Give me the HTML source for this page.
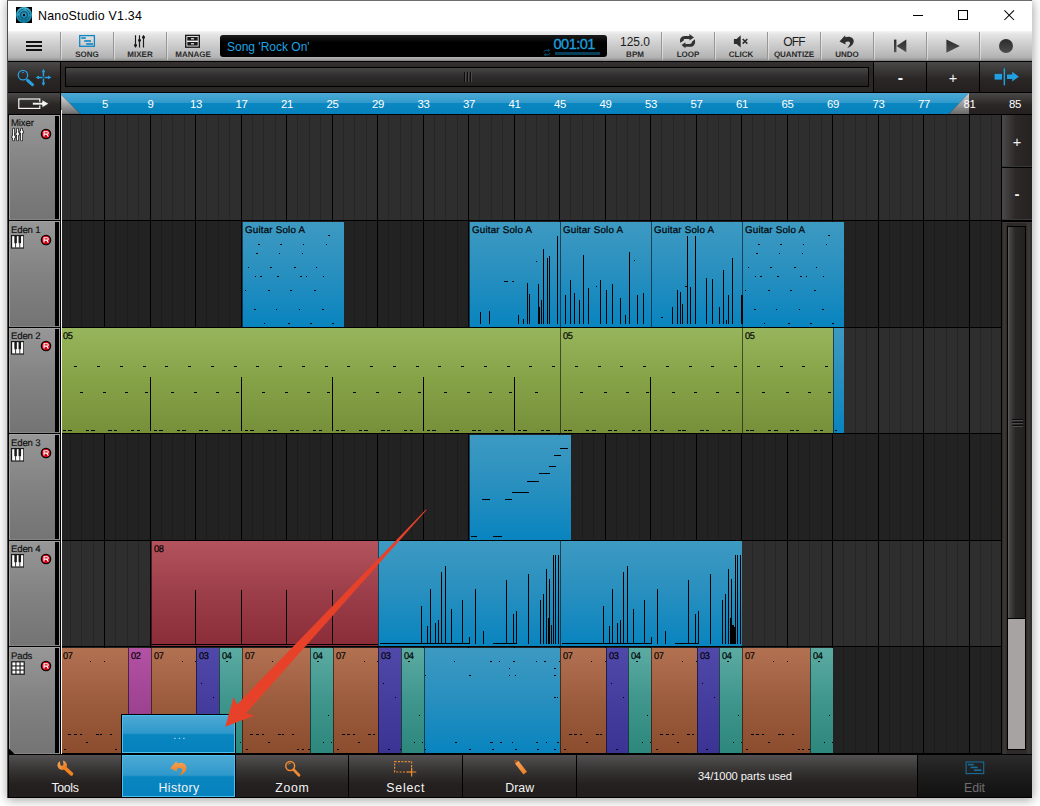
<!DOCTYPE html><html><head><meta charset="utf-8"><title>NanoStudio V1.34</title><style>
*{box-sizing:border-box}
html,body{margin:0;padding:0}
body{width:1040px;height:806px;overflow:hidden;background:#fff;font-family:"Liberation Sans",sans-serif;position:relative}
.a{position:absolute}
#shadow{left:8px;top:0;width:1024px;height:797px;box-shadow:0 2px 10px 1px rgba(0,0,0,.36)}
#win{left:7px;top:0;width:1025.4px;height:798.4px;background:#000;border:1px solid #4b4b4b;border-top-color:#6e6e6e}
#title{left:8px;top:1px;width:1024px;height:30px;background:#fff}
#title .t{left:30px;top:7.8px;font-size:12.4px;color:#000;white-space:nowrap;letter-spacing:.22px}
#tb{left:8px;top:31px;width:1024px;height:30px;background:linear-gradient(#f4f4f4 0,#e6e6e6 10%,#d0d0d0 40%,#c0c0c0 68%,#b2b2b2 88%,#9c9c9c 95%,#808080 100%)}
.sep{top:32px;width:2px;height:28px;background:linear-gradient(90deg,#969696 50%,rgba(255,255,255,.4) 50%)}
.lbl{font-weight:bold;font-size:8px;color:#2a2a2a;margin-top:1.45px;transform:rotate(.04deg);text-align:center;white-space:nowrap;line-height:8px}
.big{font-size:12px;color:#1c1c1c;text-align:center;white-space:nowrap;line-height:12px;letter-spacing:-.3px}
.disp{background:#000;border-radius:3px}
.blue{color:#1e9fdc}
.dk{background:linear-gradient(#4a4848 0,#2b2727 55%,#242020 100%)}
.clip{position:absolute;overflow:hidden}
.clip i,.n{position:absolute;background:#000;display:block}
.ct{position:absolute;left:2px;top:2.78px;-webkit-text-stroke:.2px #000;font-size:9.8px;line-height:10px;color:#000;white-space:nowrap;letter-spacing:.19px;transform:rotate(.03deg);transform-origin:0 0}
.cb{background:linear-gradient(#3d9ac2,#2a90bf 45%,#0884bf)}
.cg{background:linear-gradient(#97b55c,#86a247 50%,#76903a)}
.cr{background:linear-gradient(#b2535d,#9c3e49 50%,#8a2d38)}
.co{background:linear-gradient(#b27252,#9c5c3e 50%,#8c4c2e)}
.cm{background:linear-gradient(#b452a4,#a04494 50%,#923a88)}
.ci{background:linear-gradient(#5149aa,#463e9f 50%,#3c3494)}
.ctl{background:linear-gradient(#5caba3,#3f968c 50%,#2d877c)}
.hd{position:absolute;left:9px;width:51px;background:linear-gradient(#979797,#828282 50%,#747474);border:1px solid #a2a2a2;border-bottom-color:#858585}
.hd .nm{position:absolute;left:1px;top:2.8px;font-size:9.6px;line-height:10px;color:#101010;white-space:nowrap;letter-spacing:-.15px;transform:rotate(.03deg);transform-origin:0 0;-webkit-text-stroke:.15px #101010}
.hd .bar{position:absolute;left:45px;top:0;bottom:0;width:4px;background:#000}
.btxt{color:#f4f4f4;font-size:12.3px;text-align:center;white-space:nowrap;line-height:13px;letter-spacing:-.35px;margin-top:1.2px}
</style></head><body>
<div class="a" id="shadow"></div><div class="a" id="win"></div>
<div class="a" id="title">
<svg class="a" style="left:8px;top:6px" width="16" height="16" viewBox="0 0 16 16"><defs><linearGradient id="ig" x1="0" y1="0" x2="0" y2="1"><stop offset="0" stop-color="#4fbcdc"/><stop offset=".5" stop-color="#2394ba"/><stop offset="1" stop-color="#1282a8"/></linearGradient></defs><rect width="16" height="16" fill="#000"/><circle cx="8" cy="8" r="8" fill="url(#ig)"/><circle cx="8" cy="8" r="5.9" fill="none" stroke="#0c5875" stroke-width="1" stroke-dasharray="6.2 3.1" stroke-dashoffset="-1.5"/><circle cx="8" cy="8" r="3.4" fill="none" stroke="#0a4e68" stroke-width="1.1"/><rect x="7.3" y="8.5" width="1.4" height="6.5" fill="#1a86ab"/><rect x="6.3" y="10.5" width="1" height="4" fill="#0d5c79"/><rect x="8.7" y="10.5" width="1" height="4" fill="#0d5c79"/><rect x="7.5" y="0.8" width="1" height="3.6" fill="#1d86a8"/><circle cx="8" cy="8" r="1.15" fill="#000"/></svg>
<div class="a t">NanoStudio V1.34</div>
<svg class="a" style="left:900px;top:4px" width="120" height="20" viewBox="0 0 120 20" fill="none" stroke="#000" stroke-width="1"><path d="M5 10.5H15"/><rect x="50.5" y="5.5" width="9" height="9"/><path d="M96.4 5.4L106 15M106 5.4L96.4 15" stroke-width="1.05"/></svg>
</div>
<div class="a" id="tb"></div>
<div class="a sep" style="left:60px"></div>
<div class="a sep" style="left:113px"></div>
<div class="a sep" style="left:166px"></div>
<div class="a sep" style="left:661px"></div>
<div class="a sep" style="left:714px"></div>
<div class="a sep" style="left:767px"></div>
<div class="a sep" style="left:820px"></div>
<div class="a sep" style="left:873px"></div>
<div class="a sep" style="left:926px"></div>
<div class="a sep" style="left:979px"></div>
<div class="a" style="left:26px;top:41px;width:16px;height:2px;background:#111"></div>
<div class="a" style="left:26px;top:45px;width:16px;height:2px;background:#111"></div>
<div class="a" style="left:26px;top:49px;width:16px;height:2px;background:#111"></div>
<svg class="a" style="left:78px;top:34px" width="18" height="14" viewBox="0 0 18 14"><rect x="1.7" y="1.6" width="14.7" height="10.7" fill="none" stroke="#0f86c4" stroke-width="1.3"/><rect x="3.2" y="3.2" width="4.6" height="1.6" fill="#0f86c4"/><rect x="6.2" y="6.2" width="6.8" height="1.6" fill="#0f86c4"/><rect x="8.2" y="9.2" width="6.8" height="1.6" fill="#0f86c4"/></svg>
<div class="a lbl" style="left:61px;top:50px;width:52px">SONG</div>
<svg class="a" style="left:132px;top:34px" width="16" height="15" viewBox="0 0 16 15" stroke="#1a1a1a" fill="#1a1a1a"><path d="M3.5 1.2V13.6M7.5 1.2V13.6M11.5 1.2V13.6" stroke-width="1.15"/><circle cx="3.5" cy="11.2" r="1.5" stroke="none"/><circle cx="7.5" cy="6.2" r="1.5" stroke="none"/><circle cx="11.5" cy="3.3" r="1.5" stroke="none"/></svg>
<div class="a lbl" style="left:114px;top:50px;width:52px">MIXER</div>
<svg class="a" style="left:184px;top:34px" width="17" height="15" viewBox="0 0 17 15"><rect x="1.7" y="1.4" width="13.6" height="11.8" fill="#efefef" stroke="#1a1a1a" stroke-width="1.4"/><rect x="3.3" y="3" width="10.4" height="3.6" fill="#1a1a1a"/><rect x="3.3" y="8" width="10.4" height="3.6" fill="#1a1a1a"/><rect x="7" y="4.2" width="3" height="1.2" fill="#efefef"/><rect x="7" y="9.2" width="3" height="1.2" fill="#efefef"/></svg>
<div class="a lbl" style="left:167px;top:50px;width:52px">MANAGE</div>
<div class="a disp" style="left:220px;top:35px;width:387px;height:22px;background:linear-gradient(#1c1c1c 0,#000 35%)"></div>
<div class="a blue" style="left:227px;top:41px;font-size:12px;line-height:13px;white-space:nowrap;color:#1ea4e2">Song 'Rock On'</div>
<div class="a blue" style="left:553.5px;top:36.5px;font-size:14.6px;line-height:14px;white-space:nowrap;letter-spacing:-.55px;-webkit-text-stroke:.35px #1e9fdc">001:01</div>
<div class="a" style="left:555px;top:52px;width:45px;height:3px;background:#073f5a"></div>
<svg class="a" style="left:543px;top:49px" width="8" height="7" viewBox="0 0 8 7" fill="none" stroke="#0d5c85" stroke-width="1"><path d="M1 3.2C1 1.8 2 1.2 3.2 1.2H6M7 3.8C7 5.2 6 5.8 4.8 5.8H2M5.2 0L6.6 1.2L5.2 2.4M2.8 4.6L1.4 5.8L2.8 7"/></svg>
<div class="a big" style="left:608px;top:36px;width:54px;letter-spacing:-.05px">125.0</div>
<div class="a lbl" style="left:608px;top:50px;width:54px">BPM</div>
<svg class="a" style="left:679px;top:34px" width="18" height="16" viewBox="0 0 18 16" fill="#333"><path d="M1.3 8.8C0.2 5 2.2 2 5.6 2H10.4V0L15 3.4L10.4 6.6V4.9H6.4C5 4.9 4.4 5.6 4.8 6.5Z"/><path d="M15.8 5.2C17 9.4 15 12.8 11.6 12.8H6.4V14.2L2.5 11.1L6.4 8.3V10H10.8C12.2 10 12.8 8.6 13.2 7.5Z"/></svg>
<div class="a lbl" style="left:662px;top:50px;width:52px">LOOP</div>
<svg class="a" style="left:733px;top:35px" width="16" height="13" viewBox="0 0 16 13"><path d="M.9 3.9H3.6L7.7 0.2V12.4L3.6 8.9H.9Z" fill="#2e2e2e"/><path d="M9.7 4L14.3 8.6M14.3 4L9.7 8.6" stroke="#2e2e2e" stroke-width="1.6" fill="none"/></svg>
<div class="a lbl" style="left:715px;top:50px;width:52px">CLICK</div>
<div class="a big" style="left:768px;top:36px;width:52px;letter-spacing:-.9px">OFF</div>
<div class="a lbl" style="left:768px;top:50px;width:52px;letter-spacing:-.1px">QUANTIZE</div>
<svg class="a" style="left:838px;top:34px" width="18" height="15" viewBox="0 0 18 15"><path transform="translate(-.2 -.4) scale(.86)" d="M2 9.3L8.6 2L8.7 4.3C13 2.6 18.4 4.4 18.5 8.6C18.6 12.4 15 15.6 11 16.8C13.4 14.2 14.8 12 14 10.2C13.3 8.7 11 8.8 8.9 9.8L9 12.6Z" fill="#2e2e2e"/></svg>
<div class="a lbl" style="left:821px;top:50px;width:52px">UNDO</div>
<svg class="a" style="left:891px;top:38px" width="18" height="16" viewBox="0 0 18 16"><defs><linearGradient id="tr" x1="0" y1="0" x2="0" y2="1"><stop offset="0" stop-color="#2c2c2c"/><stop offset="1" stop-color="#505050"/></linearGradient></defs><rect x="3" y="1.6" width="2.4" height="12.6" fill="url(#tr)"/><path d="M15.3 1.6V14.2L5.6 7.9Z" fill="url(#tr)"/></svg>
<svg class="a" style="left:944px;top:38px" width="18" height="16" viewBox="0 0 18 16"><path d="M2.4 1.5V14.7L15.8 8.1Z" fill="url(#tr)"/></svg>
<div class="a" style="left:998.6px;top:39px;width:14px;height:14px;border-radius:7px;background:linear-gradient(#2c2c2c,#4c4c4c)"></div>
<div class="a" style="left:8px;top:61px;width:1024px;height:1px;background:#000"></div>
<div class="a" style="left:8px;top:62px;width:1024px;height:53px;background:#000"></div>
<div class="a dk" style="left:8px;top:62px;width:52px;height:30px"></div>
<svg class="a" style="left:16px;top:66px" width="38" height="24" viewBox="0 0 38 24" fill="none" stroke="#2aa0de"><circle cx="6.95" cy="9.15" r="4.7" stroke-width="1.3"/><path d="M5.9 6.6Q6.9 6.1 7.9 6.6" stroke-width=".8"/><path d="M11.6 14.3L16.4 18.6" stroke-width="3.1" stroke-linecap="round"/><path d="M27.45 5V9.9M27.45 13V18M21.6 11.45H26M29 11.45H33.4" stroke-width="1.5"/><path d="M27.45 2.8L29.3 6.2H25.6ZM27.45 20.1L29.3 16.7H25.6ZM19.6 11.45L23 9.6V13.3ZM35.4 11.45L32 9.6V13.3Z" fill="#2aa0de" stroke="none"/><circle cx="27.45" cy="11.45" r=".9" stroke-width=".7"/></svg>
<div class="a" style="left:61px;top:62px;width:812px;height:30px;background:linear-gradient(#353131,#2b2727 30%)"></div>
<div class="a" style="left:65px;top:67px;width:804px;height:20px;border:1px solid #000;background:linear-gradient(#474747,#2f2d2d 45%,#232020)"></div>
<div class="a" style="left:464px;top:72px;width:1px;height:10px;background:#0c0c0c;box-shadow:1px 0 0 #4c4c4c"></div>
<div class="a" style="left:467px;top:72px;width:1px;height:10px;background:#0c0c0c;box-shadow:1px 0 0 #4c4c4c"></div>
<div class="a" style="left:470px;top:72px;width:1px;height:10px;background:#0c0c0c;box-shadow:1px 0 0 #4c4c4c"></div>
<div class="a dk" style="left:874px;top:62px;width:52px;height:30px"></div>
<div class="a dk" style="left:927px;top:62px;width:52px;height:30px"></div>
<div class="a" style="left:874.5px;top:69.7px;width:52px;text-align:center;color:#f2f2f2;font-size:16px;line-height:16px;font-weight:bold">-</div>
<div class="a" style="left:927px;top:69.8px;width:52px;text-align:center;color:#f2f2f2;font-size:14.5px;line-height:16px">+</div>
<div class="a dk" style="left:980px;top:62px;width:52px;height:30px"></div>
<svg class="a" style="left:993px;top:67px" width="28" height="20" viewBox="0 0 28 20" fill="#229fe0"><rect x="1.6" y="6.9" width="7.4" height="5.7"/><rect x="10.6" y="1.4" width="1.5" height="16.9"/><path d="M14 7.4H19.2V4.8L25.9 9.7L19.2 14.6V12.1H14Z"/></svg>
<div class="a dk" style="left:8px;top:93px;width:52px;height:21px"></div>
<svg class="a" style="left:16px;top:96px" width="36" height="16" viewBox="0 0 36 16"><rect x="2.8" y="3" width="21" height="9.4" fill="none" stroke="#f4f4f4" stroke-width="1.2"/><path d="M16.4 6.3H26V3.6L33 7.7L26 11.8V9.1H16.4Z" fill="#f4f4f4" stroke="#2b2727" stroke-width=".8"/></svg>
<div class="a dk" style="left:61px;top:93px;width:971px;height:21px"></div>
<svg class="a" style="left:61px;top:93px" width="910" height="21" viewBox="0 0 910 21"><defs><linearGradient id="rg" x1="0" y1="0" x2="0" y2="1"><stop offset="0" stop-color="#4da9d3"/><stop offset=".48" stop-color="#2f99cc"/><stop offset=".5" stop-color="#0a86c0"/><stop offset="1" stop-color="#0582bd"/></linearGradient><linearGradient id="tg" x1="0" y1="0" x2="0" y2="1"><stop offset="0" stop-color="#dcdcdc"/><stop offset="1" stop-color="#6c6c6c"/></linearGradient><linearGradient id="tg2" x1="0" y1="0" x2="0" y2="1"><stop offset="0" stop-color="#d4d4d4"/><stop offset="1" stop-color="#6a6a6a"/></linearGradient></defs><path d="M0 0H908L888 21H0Z" fill="url(#rg)"/><path d="M0 1.5V21H19.5Z" fill="url(#tg)" stroke="rgba(0,0,0,.35)" stroke-width=".6"/><path d="M908 0V21H888Z" fill="url(#tg2)"/></svg>
<div class="a" style="left:90.0px;top:98px;width:30px;text-align:center;color:#fff;font-size:11.4px;line-height:12px;letter-spacing:-.3px">5</div>
<div class="a" style="left:135.5px;top:98px;width:30px;text-align:center;color:#fff;font-size:11.4px;line-height:12px;letter-spacing:-.3px">9</div>
<div class="a" style="left:181.0px;top:98px;width:30px;text-align:center;color:#fff;font-size:11.4px;line-height:12px;letter-spacing:-.3px">13</div>
<div class="a" style="left:226.5px;top:98px;width:30px;text-align:center;color:#fff;font-size:11.4px;line-height:12px;letter-spacing:-.3px">17</div>
<div class="a" style="left:272.0px;top:98px;width:30px;text-align:center;color:#fff;font-size:11.4px;line-height:12px;letter-spacing:-.3px">21</div>
<div class="a" style="left:317.5px;top:98px;width:30px;text-align:center;color:#fff;font-size:11.4px;line-height:12px;letter-spacing:-.3px">25</div>
<div class="a" style="left:363.0px;top:98px;width:30px;text-align:center;color:#fff;font-size:11.4px;line-height:12px;letter-spacing:-.3px">29</div>
<div class="a" style="left:408.5px;top:98px;width:30px;text-align:center;color:#fff;font-size:11.4px;line-height:12px;letter-spacing:-.3px">33</div>
<div class="a" style="left:454.0px;top:98px;width:30px;text-align:center;color:#fff;font-size:11.4px;line-height:12px;letter-spacing:-.3px">37</div>
<div class="a" style="left:499.5px;top:98px;width:30px;text-align:center;color:#fff;font-size:11.4px;line-height:12px;letter-spacing:-.3px">41</div>
<div class="a" style="left:545.0px;top:98px;width:30px;text-align:center;color:#fff;font-size:11.4px;line-height:12px;letter-spacing:-.3px">45</div>
<div class="a" style="left:590.5px;top:98px;width:30px;text-align:center;color:#fff;font-size:11.4px;line-height:12px;letter-spacing:-.3px">49</div>
<div class="a" style="left:636.0px;top:98px;width:30px;text-align:center;color:#fff;font-size:11.4px;line-height:12px;letter-spacing:-.3px">53</div>
<div class="a" style="left:681.5px;top:98px;width:30px;text-align:center;color:#fff;font-size:11.4px;line-height:12px;letter-spacing:-.3px">57</div>
<div class="a" style="left:727.0px;top:98px;width:30px;text-align:center;color:#fff;font-size:11.4px;line-height:12px;letter-spacing:-.3px">61</div>
<div class="a" style="left:772.5px;top:98px;width:30px;text-align:center;color:#fff;font-size:11.4px;line-height:12px;letter-spacing:-.3px">65</div>
<div class="a" style="left:818.0px;top:98px;width:30px;text-align:center;color:#fff;font-size:11.4px;line-height:12px;letter-spacing:-.3px">69</div>
<div class="a" style="left:863.5px;top:98px;width:30px;text-align:center;color:#fff;font-size:11.4px;line-height:12px;letter-spacing:-.3px">73</div>
<div class="a" style="left:909.0px;top:98px;width:30px;text-align:center;color:#fff;font-size:11.4px;line-height:12px;letter-spacing:-.3px">77</div>
<div class="a" style="left:954.5px;top:98px;width:30px;text-align:center;color:#fff;font-size:11.4px;line-height:12px;letter-spacing:-.3px">81</div>
<div class="a" style="left:1000.0px;top:98px;width:30px;text-align:center;color:#fff;font-size:11.4px;line-height:12px;letter-spacing:-.3px">85</div>
<div class="a" style="left:61px;top:110px;width:1px;height:644px;background:#f0f0f0"></div>
<div class="a" style="left:60px;top:115px;width:1px;height:639px;background:#000"></div>
<div class="a" style="left:62px;top:115px;width:939px;height:105px;background:#2e2e2e"></div>
<div class="a" style="left:62px;top:221px;width:939px;height:106px;background:#222222"></div>
<div class="a" style="left:62px;top:328px;width:939px;height:105px;background:#2e2e2e"></div>
<div class="a" style="left:62px;top:434px;width:939px;height:106px;background:#222222"></div>
<div class="a" style="left:62px;top:541px;width:939px;height:105px;background:#2e2e2e"></div>
<div class="a" style="left:62px;top:647px;width:939px;height:106px;background:#222222"></div>
<div class="a" style="left:70px;top:115px;width:1px;height:639px;background:rgba(0,0,0,.16)"></div>
<div class="a" style="left:81px;top:115px;width:1px;height:639px;background:rgba(0,0,0,.16)"></div>
<div class="a" style="left:93px;top:115px;width:1px;height:639px;background:rgba(0,0,0,.16)"></div>
<div class="a" style="left:104px;top:115px;width:1px;height:639px;background:#000"></div>
<div class="a" style="left:115px;top:115px;width:1px;height:639px;background:rgba(0,0,0,.16)"></div>
<div class="a" style="left:127px;top:115px;width:1px;height:639px;background:rgba(0,0,0,.16)"></div>
<div class="a" style="left:138px;top:115px;width:1px;height:639px;background:rgba(0,0,0,.16)"></div>
<div class="a" style="left:150px;top:115px;width:1px;height:639px;background:#000"></div>
<div class="a" style="left:161px;top:115px;width:1px;height:639px;background:rgba(0,0,0,.16)"></div>
<div class="a" style="left:172px;top:115px;width:1px;height:639px;background:rgba(0,0,0,.16)"></div>
<div class="a" style="left:184px;top:115px;width:1px;height:639px;background:rgba(0,0,0,.16)"></div>
<div class="a" style="left:195px;top:115px;width:1px;height:639px;background:#000"></div>
<div class="a" style="left:206px;top:115px;width:1px;height:639px;background:rgba(0,0,0,.16)"></div>
<div class="a" style="left:218px;top:115px;width:1px;height:639px;background:rgba(0,0,0,.16)"></div>
<div class="a" style="left:229px;top:115px;width:1px;height:639px;background:rgba(0,0,0,.16)"></div>
<div class="a" style="left:241px;top:115px;width:1px;height:639px;background:#000"></div>
<div class="a" style="left:252px;top:115px;width:1px;height:639px;background:rgba(0,0,0,.16)"></div>
<div class="a" style="left:263px;top:115px;width:1px;height:639px;background:rgba(0,0,0,.16)"></div>
<div class="a" style="left:275px;top:115px;width:1px;height:639px;background:rgba(0,0,0,.16)"></div>
<div class="a" style="left:286px;top:115px;width:1px;height:639px;background:#000"></div>
<div class="a" style="left:297px;top:115px;width:1px;height:639px;background:rgba(0,0,0,.16)"></div>
<div class="a" style="left:309px;top:115px;width:1px;height:639px;background:rgba(0,0,0,.16)"></div>
<div class="a" style="left:320px;top:115px;width:1px;height:639px;background:rgba(0,0,0,.16)"></div>
<div class="a" style="left:332px;top:115px;width:1px;height:639px;background:#000"></div>
<div class="a" style="left:343px;top:115px;width:1px;height:639px;background:rgba(0,0,0,.16)"></div>
<div class="a" style="left:354px;top:115px;width:1px;height:639px;background:rgba(0,0,0,.16)"></div>
<div class="a" style="left:366px;top:115px;width:1px;height:639px;background:rgba(0,0,0,.16)"></div>
<div class="a" style="left:377px;top:115px;width:1px;height:639px;background:#000"></div>
<div class="a" style="left:388px;top:115px;width:1px;height:639px;background:rgba(0,0,0,.16)"></div>
<div class="a" style="left:400px;top:115px;width:1px;height:639px;background:rgba(0,0,0,.16)"></div>
<div class="a" style="left:411px;top:115px;width:1px;height:639px;background:rgba(0,0,0,.16)"></div>
<div class="a" style="left:423px;top:115px;width:1px;height:639px;background:#000"></div>
<div class="a" style="left:434px;top:115px;width:1px;height:639px;background:rgba(0,0,0,.16)"></div>
<div class="a" style="left:445px;top:115px;width:1px;height:639px;background:rgba(0,0,0,.16)"></div>
<div class="a" style="left:457px;top:115px;width:1px;height:639px;background:rgba(0,0,0,.16)"></div>
<div class="a" style="left:468px;top:115px;width:1px;height:639px;background:#000"></div>
<div class="a" style="left:479px;top:115px;width:1px;height:639px;background:rgba(0,0,0,.16)"></div>
<div class="a" style="left:491px;top:115px;width:1px;height:639px;background:rgba(0,0,0,.16)"></div>
<div class="a" style="left:502px;top:115px;width:1px;height:639px;background:rgba(0,0,0,.16)"></div>
<div class="a" style="left:514px;top:115px;width:1px;height:639px;background:#000"></div>
<div class="a" style="left:525px;top:115px;width:1px;height:639px;background:rgba(0,0,0,.16)"></div>
<div class="a" style="left:536px;top:115px;width:1px;height:639px;background:rgba(0,0,0,.16)"></div>
<div class="a" style="left:548px;top:115px;width:1px;height:639px;background:rgba(0,0,0,.16)"></div>
<div class="a" style="left:559px;top:115px;width:1px;height:639px;background:#000"></div>
<div class="a" style="left:570px;top:115px;width:1px;height:639px;background:rgba(0,0,0,.16)"></div>
<div class="a" style="left:582px;top:115px;width:1px;height:639px;background:rgba(0,0,0,.16)"></div>
<div class="a" style="left:593px;top:115px;width:1px;height:639px;background:rgba(0,0,0,.16)"></div>
<div class="a" style="left:605px;top:115px;width:1px;height:639px;background:#000"></div>
<div class="a" style="left:616px;top:115px;width:1px;height:639px;background:rgba(0,0,0,.16)"></div>
<div class="a" style="left:627px;top:115px;width:1px;height:639px;background:rgba(0,0,0,.16)"></div>
<div class="a" style="left:639px;top:115px;width:1px;height:639px;background:rgba(0,0,0,.16)"></div>
<div class="a" style="left:650px;top:115px;width:1px;height:639px;background:#000"></div>
<div class="a" style="left:661px;top:115px;width:1px;height:639px;background:rgba(0,0,0,.16)"></div>
<div class="a" style="left:673px;top:115px;width:1px;height:639px;background:rgba(0,0,0,.16)"></div>
<div class="a" style="left:684px;top:115px;width:1px;height:639px;background:rgba(0,0,0,.16)"></div>
<div class="a" style="left:696px;top:115px;width:1px;height:639px;background:#000"></div>
<div class="a" style="left:707px;top:115px;width:1px;height:639px;background:rgba(0,0,0,.16)"></div>
<div class="a" style="left:718px;top:115px;width:1px;height:639px;background:rgba(0,0,0,.16)"></div>
<div class="a" style="left:730px;top:115px;width:1px;height:639px;background:rgba(0,0,0,.16)"></div>
<div class="a" style="left:741px;top:115px;width:1px;height:639px;background:#000"></div>
<div class="a" style="left:752px;top:115px;width:1px;height:639px;background:rgba(0,0,0,.16)"></div>
<div class="a" style="left:764px;top:115px;width:1px;height:639px;background:rgba(0,0,0,.16)"></div>
<div class="a" style="left:775px;top:115px;width:1px;height:639px;background:rgba(0,0,0,.16)"></div>
<div class="a" style="left:787px;top:115px;width:1px;height:639px;background:#000"></div>
<div class="a" style="left:798px;top:115px;width:1px;height:639px;background:rgba(0,0,0,.16)"></div>
<div class="a" style="left:809px;top:115px;width:1px;height:639px;background:rgba(0,0,0,.16)"></div>
<div class="a" style="left:821px;top:115px;width:1px;height:639px;background:rgba(0,0,0,.16)"></div>
<div class="a" style="left:832px;top:115px;width:1px;height:639px;background:#000"></div>
<div class="a" style="left:843px;top:115px;width:1px;height:639px;background:rgba(0,0,0,.16)"></div>
<div class="a" style="left:855px;top:115px;width:1px;height:639px;background:rgba(0,0,0,.16)"></div>
<div class="a" style="left:866px;top:115px;width:1px;height:639px;background:rgba(0,0,0,.16)"></div>
<div class="a" style="left:878px;top:115px;width:1px;height:639px;background:#000"></div>
<div class="a" style="left:889px;top:115px;width:1px;height:639px;background:rgba(0,0,0,.16)"></div>
<div class="a" style="left:900px;top:115px;width:1px;height:639px;background:rgba(0,0,0,.16)"></div>
<div class="a" style="left:912px;top:115px;width:1px;height:639px;background:rgba(0,0,0,.16)"></div>
<div class="a" style="left:923px;top:115px;width:1px;height:639px;background:#000"></div>
<div class="a" style="left:934px;top:115px;width:1px;height:639px;background:rgba(0,0,0,.16)"></div>
<div class="a" style="left:946px;top:115px;width:1px;height:639px;background:rgba(0,0,0,.16)"></div>
<div class="a" style="left:957px;top:115px;width:1px;height:639px;background:rgba(0,0,0,.16)"></div>
<div class="a" style="left:969px;top:115px;width:1px;height:639px;background:#000"></div>
<div class="a" style="left:980px;top:115px;width:1px;height:639px;background:rgba(0,0,0,.16)"></div>
<div class="a" style="left:991px;top:115px;width:1px;height:639px;background:rgba(0,0,0,.16)"></div>
<div class="hd" style="top:115px;height:105px;"><div class="bar"></div><div class="a" style="left:0;top:0px"><div class="nm" style="top:1.9px">Mixer</div><svg class="a" style="left:1px;top:11px" width="14" height="15" viewBox="0 0 14 15"><g stroke="#1a1a1a" stroke-width="2.6" stroke-linecap="round"><path d="M2.6 2V13M6.6 2V13M10.6 2V13"/></g><g fill="#1a1a1a"><circle cx="2.6" cy="10" r="2.3"/><circle cx="6.6" cy="7" r="2.3"/><circle cx="10.6" cy="5" r="2.3"/></g><g stroke="#fff" stroke-width="1.1" stroke-linecap="round"><path d="M2.6 2V13M6.6 2V13M10.6 2V13"/></g><g fill="#fff"><circle cx="2.6" cy="10" r="1.4"/><circle cx="6.6" cy="7" r="1.4"/><circle cx="10.6" cy="5" r="1.4"/></g></svg><svg class="a" style="left:28.9px;top:11.2px" width="14" height="14" viewBox="0 0 14 14"><circle cx="7" cy="7" r="4.75" fill="#d20012" stroke="#000" stroke-width="1.1"/><path d="M5 9.6V4.7H8.3Q9.3 4.7 9.3 5.9Q9.3 7.1 8.3 7.1H5M7.7 7.1L9.4 9.6" fill="none" stroke="#fff" stroke-width="1.1"/></svg></div></div>
<div class="hd" style="top:221px;height:106px;"><div class="bar"></div><div class="a" style="left:0;top:0px"><div class="nm">Eden 1</div><svg class="a" style="left:1px;top:13px" width="13.4" height="13.6" viewBox="0 0 14 14" preserveAspectRatio="none"><rect x=".6" y=".6" width="12.8" height="12.8" fill="#fff" stroke="#1a1a1a" stroke-width="1.2"/><path d="M4.8 1V13M9.2 1V13" stroke="#1a1a1a" stroke-width=".9"/><rect x="3.5" y="1" width="2.6" height="7.4" fill="#1a1a1a"/><rect x="7.9" y="1" width="2.6" height="7.4" fill="#1a1a1a"/></svg><svg class="a" style="left:28.9px;top:11.2px" width="14" height="14" viewBox="0 0 14 14"><circle cx="7" cy="7" r="4.75" fill="#d20012" stroke="#000" stroke-width="1.1"/><path d="M5 9.6V4.7H8.3Q9.3 4.7 9.3 5.9Q9.3 7.1 8.3 7.1H5M7.7 7.1L9.4 9.6" fill="none" stroke="#fff" stroke-width="1.1"/></svg></div></div>
<div class="hd" style="top:328px;height:105px;"><div class="bar"></div><div class="a" style="left:0;top:-1px"><div class="nm">Eden 2</div><svg class="a" style="left:1px;top:13px" width="13.4" height="13.6" viewBox="0 0 14 14" preserveAspectRatio="none"><rect x=".6" y=".6" width="12.8" height="12.8" fill="#fff" stroke="#1a1a1a" stroke-width="1.2"/><path d="M4.8 1V13M9.2 1V13" stroke="#1a1a1a" stroke-width=".9"/><rect x="3.5" y="1" width="2.6" height="7.4" fill="#1a1a1a"/><rect x="7.9" y="1" width="2.6" height="7.4" fill="#1a1a1a"/></svg><svg class="a" style="left:28.9px;top:11.2px" width="14" height="14" viewBox="0 0 14 14"><circle cx="7" cy="7" r="4.75" fill="#d20012" stroke="#000" stroke-width="1.1"/><path d="M5 9.6V4.7H8.3Q9.3 4.7 9.3 5.9Q9.3 7.1 8.3 7.1H5M7.7 7.1L9.4 9.6" fill="none" stroke="#fff" stroke-width="1.1"/></svg></div></div>
<div class="hd" style="top:434px;height:106px;"><div class="bar"></div><div class="a" style="left:0;top:0px"><div class="nm">Eden 3</div><svg class="a" style="left:1px;top:13px" width="13.4" height="13.6" viewBox="0 0 14 14" preserveAspectRatio="none"><rect x=".6" y=".6" width="12.8" height="12.8" fill="#fff" stroke="#1a1a1a" stroke-width="1.2"/><path d="M4.8 1V13M9.2 1V13" stroke="#1a1a1a" stroke-width=".9"/><rect x="3.5" y="1" width="2.6" height="7.4" fill="#1a1a1a"/><rect x="7.9" y="1" width="2.6" height="7.4" fill="#1a1a1a"/></svg><svg class="a" style="left:28.9px;top:11.2px" width="14" height="14" viewBox="0 0 14 14"><circle cx="7" cy="7" r="4.75" fill="#d20012" stroke="#000" stroke-width="1.1"/><path d="M5 9.6V4.7H8.3Q9.3 4.7 9.3 5.9Q9.3 7.1 8.3 7.1H5M7.7 7.1L9.4 9.6" fill="none" stroke="#fff" stroke-width="1.1"/></svg></div></div>
<div class="hd" style="top:541px;height:105px;"><div class="bar"></div><div class="a" style="left:0;top:-1px"><div class="nm">Eden 4</div><svg class="a" style="left:1px;top:13px" width="13.4" height="13.6" viewBox="0 0 14 14" preserveAspectRatio="none"><rect x=".6" y=".6" width="12.8" height="12.8" fill="#fff" stroke="#1a1a1a" stroke-width="1.2"/><path d="M4.8 1V13M9.2 1V13" stroke="#1a1a1a" stroke-width=".9"/><rect x="3.5" y="1" width="2.6" height="7.4" fill="#1a1a1a"/><rect x="7.9" y="1" width="2.6" height="7.4" fill="#1a1a1a"/></svg><svg class="a" style="left:28.9px;top:11.2px" width="14" height="14" viewBox="0 0 14 14"><circle cx="7" cy="7" r="4.75" fill="#d20012" stroke="#000" stroke-width="1.1"/><path d="M5 9.6V4.7H8.3Q9.3 4.7 9.3 5.9Q9.3 7.1 8.3 7.1H5M7.7 7.1L9.4 9.6" fill="none" stroke="#fff" stroke-width="1.1"/></svg></div></div>
<div class="hd" style="top:647px;height:107px; clip-path:polygon(0 0,100% 0,100% 100%,5.5px 100%,0 calc(100% - 5.5px));"><div class="bar"></div><div class="a" style="left:0;top:0px"><div class="nm">Pads</div><svg class="a" style="left:1px;top:13px" width="14" height="14" viewBox="0 0 14 14"><rect x=".2" y=".2" width="13.6" height="13.6" fill="#1a1a1a"/><rect x="1.4" y="1.4" width="3" height="3" fill="#fff"/><rect x="1.4" y="5.5" width="3" height="3" fill="#fff"/><rect x="1.4" y="9.6" width="3" height="3" fill="#fff"/><rect x="5.5" y="1.4" width="3" height="3" fill="#fff"/><rect x="5.5" y="5.5" width="3" height="3" fill="#fff"/><rect x="5.5" y="9.6" width="3" height="3" fill="#fff"/><rect x="9.6" y="1.4" width="3" height="3" fill="#fff"/><rect x="9.6" y="5.5" width="3" height="3" fill="#fff"/><rect x="9.6" y="9.6" width="3" height="3" fill="#fff"/></svg><svg class="a" style="left:28.9px;top:11.2px" width="14" height="14" viewBox="0 0 14 14"><circle cx="7" cy="7" r="4.75" fill="#d20012" stroke="#000" stroke-width="1.1"/><path d="M5 9.6V4.7H8.3Q9.3 4.7 9.3 5.9Q9.3 7.1 8.3 7.1H5M7.7 7.1L9.4 9.6" fill="none" stroke="#fff" stroke-width="1.1"/></svg></div></div>
<div class="clip cb" style="left:242px;top:222px;width:102px;height:105px;border-left:1px solid rgba(0,0,0,.55)"><span class="ct">Guitar Solo A</span></div>
<div class="clip cb" style="left:469px;top:222px;width:91px;height:105px;border-left:1px solid rgba(0,0,0,.55)"><span class="ct">Guitar Solo A</span></div>
<div class="clip cb" style="left:560px;top:222px;width:91px;height:105px;border-left:1px solid rgba(0,0,0,.55)"><span class="ct">Guitar Solo A</span></div>
<div class="clip cb" style="left:651px;top:222px;width:91px;height:105px;border-left:1px solid rgba(0,0,0,.55)"><span class="ct">Guitar Solo A</span></div>
<div class="clip cb" style="left:742px;top:222px;width:102px;height:105px;border-left:1px solid rgba(0,0,0,.55)"><span class="ct">Guitar Solo A</span></div>
<i class="n" style="left:328px;top:235px;width:2px;height:1px"></i>
<i class="n" style="left:258px;top:244px;width:2px;height:1px"></i>
<i class="n" style="left:280px;top:244px;width:2px;height:1px"></i>
<i class="n" style="left:303px;top:244px;width:1px;height:1px"></i>
<i class="n" style="left:326px;top:244px;width:1px;height:1px"></i>
<i class="n" style="left:256px;top:253px;width:2px;height:1px"></i>
<i class="n" style="left:279px;top:253px;width:1px;height:1px"></i>
<i class="n" style="left:302px;top:253px;width:1px;height:1px"></i>
<i class="n" style="left:248px;top:267px;width:1px;height:1px"></i>
<i class="n" style="left:270px;top:267px;width:2px;height:1px"></i>
<i class="n" style="left:294px;top:267px;width:2px;height:1px"></i>
<i class="n" style="left:316px;top:267px;width:1px;height:1px"></i>
<i class="n" style="left:255px;top:276px;width:1px;height:1px"></i>
<i class="n" style="left:260px;top:276px;width:2px;height:1px"></i>
<i class="n" style="left:277px;top:276px;width:2px;height:1px"></i>
<i class="n" style="left:300px;top:276px;width:2px;height:1px"></i>
<i class="n" style="left:306px;top:276px;width:1px;height:1px"></i>
<i class="n" style="left:323px;top:276px;width:1px;height:1px"></i>
<i class="n" style="left:245px;top:290px;width:1px;height:1px"></i>
<i class="n" style="left:268px;top:290px;width:2px;height:1px"></i>
<i class="n" style="left:290px;top:290px;width:2px;height:1px"></i>
<i class="n" style="left:314px;top:290px;width:2px;height:1px"></i>
<i class="n" style="left:254px;top:309px;width:2px;height:1px"></i>
<i class="n" style="left:276px;top:309px;width:1px;height:1px"></i>
<i class="n" style="left:299px;top:309px;width:1px;height:1px"></i>
<i class="n" style="left:322px;top:309px;width:2px;height:1px"></i>
<i class="n" style="left:264px;top:323px;width:1px;height:1px"></i>
<i class="n" style="left:288px;top:323px;width:2px;height:1px"></i>
<i class="n" style="left:310px;top:323px;width:2px;height:1px"></i>
<i class="n" style="left:332px;top:323px;width:2px;height:1px"></i>
<i class="n" style="left:828px;top:235px;width:2px;height:1px"></i>
<i class="n" style="left:758px;top:244px;width:2px;height:1px"></i>
<i class="n" style="left:780px;top:244px;width:2px;height:1px"></i>
<i class="n" style="left:803px;top:244px;width:1px;height:1px"></i>
<i class="n" style="left:826px;top:244px;width:1px;height:1px"></i>
<i class="n" style="left:756px;top:253px;width:2px;height:1px"></i>
<i class="n" style="left:779px;top:253px;width:1px;height:1px"></i>
<i class="n" style="left:802px;top:253px;width:1px;height:1px"></i>
<i class="n" style="left:748px;top:267px;width:1px;height:1px"></i>
<i class="n" style="left:770px;top:267px;width:2px;height:1px"></i>
<i class="n" style="left:794px;top:267px;width:2px;height:1px"></i>
<i class="n" style="left:816px;top:267px;width:1px;height:1px"></i>
<i class="n" style="left:755px;top:276px;width:1px;height:1px"></i>
<i class="n" style="left:760px;top:276px;width:2px;height:1px"></i>
<i class="n" style="left:777px;top:276px;width:2px;height:1px"></i>
<i class="n" style="left:800px;top:276px;width:2px;height:1px"></i>
<i class="n" style="left:806px;top:276px;width:1px;height:1px"></i>
<i class="n" style="left:823px;top:276px;width:1px;height:1px"></i>
<i class="n" style="left:745px;top:290px;width:1px;height:1px"></i>
<i class="n" style="left:768px;top:290px;width:2px;height:1px"></i>
<i class="n" style="left:790px;top:290px;width:2px;height:1px"></i>
<i class="n" style="left:814px;top:290px;width:2px;height:1px"></i>
<i class="n" style="left:754px;top:309px;width:2px;height:1px"></i>
<i class="n" style="left:776px;top:309px;width:1px;height:1px"></i>
<i class="n" style="left:799px;top:309px;width:1px;height:1px"></i>
<i class="n" style="left:822px;top:309px;width:2px;height:1px"></i>
<i class="n" style="left:764px;top:323px;width:1px;height:1px"></i>
<i class="n" style="left:788px;top:323px;width:2px;height:1px"></i>
<i class="n" style="left:810px;top:323px;width:2px;height:1px"></i>
<i class="n" style="left:832px;top:323px;width:2px;height:1px"></i>
<i class="n" style="left:480px;top:312px;width:1px;height:12px"></i>
<i class="n" style="left:489px;top:311px;width:1px;height:13px"></i>
<i class="n" style="left:518px;top:315px;width:1px;height:9px"></i>
<i class="n" style="left:523px;top:319px;width:1px;height:5px"></i>
<i class="n" style="left:527px;top:283px;width:1px;height:41px"></i>
<i class="n" style="left:529px;top:294px;width:1px;height:30px"></i>
<i class="n" style="left:538px;top:284px;width:1px;height:40px"></i>
<i class="n" style="left:539px;top:307px;width:1px;height:17px"></i>
<i class="n" style="left:541px;top:300px;width:1px;height:24px"></i>
<i class="n" style="left:543px;top:249px;width:1px;height:75px"></i>
<i class="n" style="left:547px;top:258px;width:1px;height:66px"></i>
<i class="n" style="left:549px;top:256px;width:1px;height:68px"></i>
<i class="n" style="left:557px;top:236px;width:1px;height:88px"></i>
<i class="n" style="left:504px;top:281px;width:4px;height:1px"></i>
<i class="n" style="left:512px;top:281px;width:2px;height:1px"></i>
<i class="n" style="left:536px;top:261px;width:1px;height:1px"></i>
<i class="n" style="left:565px;top:295px;width:1px;height:29px"></i>
<i class="n" style="left:570px;top:280px;width:1px;height:44px"></i>
<i class="n" style="left:574px;top:293px;width:1px;height:31px"></i>
<i class="n" style="left:579px;top:300px;width:1px;height:24px"></i>
<i class="n" style="left:583px;top:255px;width:1px;height:69px"></i>
<i class="n" style="left:588px;top:288px;width:1px;height:36px"></i>
<i class="n" style="left:600px;top:280px;width:1px;height:44px"></i>
<i class="n" style="left:606px;top:290px;width:1px;height:34px"></i>
<i class="n" style="left:612px;top:284px;width:1px;height:40px"></i>
<i class="n" style="left:620px;top:298px;width:1px;height:26px"></i>
<i class="n" style="left:625px;top:315px;width:1px;height:9px"></i>
<i class="n" style="left:629px;top:252px;width:1px;height:72px"></i>
<i class="n" style="left:637px;top:295px;width:1px;height:29px"></i>
<i class="n" style="left:643px;top:293px;width:1px;height:31px"></i>
<i class="n" style="left:596px;top:286px;width:1px;height:1px"></i>
<i class="n" style="left:634px;top:260px;width:1px;height:1px"></i>
<i class="n" style="left:672px;top:307px;width:1px;height:17px"></i>
<i class="n" style="left:677px;top:290px;width:1px;height:34px"></i>
<i class="n" style="left:680px;top:292px;width:1px;height:32px"></i>
<i class="n" style="left:682px;top:304px;width:1px;height:20px"></i>
<i class="n" style="left:687px;top:236px;width:1px;height:88px"></i>
<i class="n" style="left:690px;top:287px;width:1px;height:37px"></i>
<i class="n" style="left:695px;top:236px;width:1px;height:88px"></i>
<i class="n" style="left:706px;top:278px;width:1px;height:46px"></i>
<i class="n" style="left:712px;top:279px;width:1px;height:45px"></i>
<i class="n" style="left:719px;top:307px;width:1px;height:17px"></i>
<i class="n" style="left:723px;top:270px;width:1px;height:54px"></i>
<i class="n" style="left:726px;top:320px;width:1px;height:4px"></i>
<i class="n" style="left:728px;top:295px;width:1px;height:29px"></i>
<i class="n" style="left:732px;top:258px;width:1px;height:66px"></i>
<i class="n" style="left:741px;top:295px;width:2px;height:29px"></i>
<i class="n" style="left:661px;top:317px;width:2px;height:1px"></i>
<i class="n" style="left:685px;top:286px;width:2px;height:1px"></i>
<div class="clip cg" style="left:60px;top:328px;width:500px;height:105px;border-left:1px solid rgba(0,0,0,.55)"><span class="ct" style="letter-spacing:-.4px;transform:rotate(.03deg) scaleX(.94)">05</span></div>
<div class="clip cg" style="left:560px;top:328px;width:182px;height:105px;border-left:1px solid rgba(0,0,0,.55)"><span class="ct" style="letter-spacing:-.4px;transform:rotate(.03deg) scaleX(.94)">05</span></div>
<div class="clip cg" style="left:742px;top:328px;width:91px;height:105px;border-left:1px solid rgba(0,0,0,.55)"><span class="ct" style="letter-spacing:-.4px;transform:rotate(.03deg) scaleX(.94)">05</span></div>
<div class="clip cb" style="left:833px;top:328px;width:11px;height:105px;border-left:1px solid rgba(0,0,0,.55)"></div>
<i class="n" style="left:74px;top:366px;width:3px;height:1px"></i>
<i class="n" style="left:97px;top:366px;width:3px;height:1px"></i>
<i class="n" style="left:120px;top:366px;width:3px;height:1px"></i>
<i class="n" style="left:143px;top:366px;width:3px;height:1px"></i>
<i class="n" style="left:80px;top:392px;width:3px;height:1px"></i>
<i class="n" style="left:103px;top:392px;width:3px;height:1px"></i>
<i class="n" style="left:125px;top:392px;width:3px;height:1px"></i>
<i class="n" style="left:145px;top:392px;width:3px;height:1px"></i>
<i class="n" style="left:63px;top:430px;width:3px;height:1px"></i>
<i class="n" style="left:68px;top:430px;width:4px;height:1px"></i>
<i class="n" style="left:86px;top:430px;width:3px;height:1px"></i>
<i class="n" style="left:91px;top:430px;width:4px;height:1px"></i>
<i class="n" style="left:108px;top:430px;width:4px;height:1px"></i>
<i class="n" style="left:114px;top:430px;width:3px;height:1px"></i>
<i class="n" style="left:131px;top:430px;width:3px;height:1px"></i>
<i class="n" style="left:137px;top:430px;width:3px;height:1px"></i>
<i class="n" style="left:150px;top:377px;width:1px;height:54px"></i>
<i class="n" style="left:165px;top:366px;width:3px;height:1px"></i>
<i class="n" style="left:188px;top:366px;width:3px;height:1px"></i>
<i class="n" style="left:211px;top:366px;width:3px;height:1px"></i>
<i class="n" style="left:234px;top:366px;width:3px;height:1px"></i>
<i class="n" style="left:171px;top:392px;width:3px;height:1px"></i>
<i class="n" style="left:194px;top:392px;width:3px;height:1px"></i>
<i class="n" style="left:216px;top:392px;width:3px;height:1px"></i>
<i class="n" style="left:236px;top:392px;width:3px;height:1px"></i>
<i class="n" style="left:154px;top:430px;width:3px;height:1px"></i>
<i class="n" style="left:159px;top:430px;width:4px;height:1px"></i>
<i class="n" style="left:177px;top:430px;width:3px;height:1px"></i>
<i class="n" style="left:182px;top:430px;width:4px;height:1px"></i>
<i class="n" style="left:199px;top:430px;width:4px;height:1px"></i>
<i class="n" style="left:205px;top:430px;width:3px;height:1px"></i>
<i class="n" style="left:222px;top:430px;width:3px;height:1px"></i>
<i class="n" style="left:228px;top:430px;width:3px;height:1px"></i>
<i class="n" style="left:241px;top:377px;width:1px;height:54px"></i>
<i class="n" style="left:256px;top:366px;width:3px;height:1px"></i>
<i class="n" style="left:279px;top:366px;width:3px;height:1px"></i>
<i class="n" style="left:302px;top:366px;width:3px;height:1px"></i>
<i class="n" style="left:325px;top:366px;width:3px;height:1px"></i>
<i class="n" style="left:262px;top:392px;width:3px;height:1px"></i>
<i class="n" style="left:285px;top:392px;width:3px;height:1px"></i>
<i class="n" style="left:307px;top:392px;width:3px;height:1px"></i>
<i class="n" style="left:327px;top:392px;width:3px;height:1px"></i>
<i class="n" style="left:245px;top:430px;width:3px;height:1px"></i>
<i class="n" style="left:250px;top:430px;width:4px;height:1px"></i>
<i class="n" style="left:268px;top:430px;width:3px;height:1px"></i>
<i class="n" style="left:273px;top:430px;width:4px;height:1px"></i>
<i class="n" style="left:290px;top:430px;width:4px;height:1px"></i>
<i class="n" style="left:296px;top:430px;width:3px;height:1px"></i>
<i class="n" style="left:313px;top:430px;width:3px;height:1px"></i>
<i class="n" style="left:319px;top:430px;width:3px;height:1px"></i>
<i class="n" style="left:332px;top:377px;width:1px;height:54px"></i>
<i class="n" style="left:347px;top:366px;width:3px;height:1px"></i>
<i class="n" style="left:370px;top:366px;width:3px;height:1px"></i>
<i class="n" style="left:393px;top:366px;width:3px;height:1px"></i>
<i class="n" style="left:416px;top:366px;width:3px;height:1px"></i>
<i class="n" style="left:353px;top:392px;width:3px;height:1px"></i>
<i class="n" style="left:376px;top:392px;width:3px;height:1px"></i>
<i class="n" style="left:398px;top:392px;width:3px;height:1px"></i>
<i class="n" style="left:418px;top:392px;width:3px;height:1px"></i>
<i class="n" style="left:336px;top:430px;width:3px;height:1px"></i>
<i class="n" style="left:341px;top:430px;width:4px;height:1px"></i>
<i class="n" style="left:359px;top:430px;width:3px;height:1px"></i>
<i class="n" style="left:364px;top:430px;width:4px;height:1px"></i>
<i class="n" style="left:381px;top:430px;width:4px;height:1px"></i>
<i class="n" style="left:387px;top:430px;width:3px;height:1px"></i>
<i class="n" style="left:404px;top:430px;width:3px;height:1px"></i>
<i class="n" style="left:410px;top:430px;width:3px;height:1px"></i>
<i class="n" style="left:423px;top:377px;width:1px;height:54px"></i>
<i class="n" style="left:438px;top:366px;width:3px;height:1px"></i>
<i class="n" style="left:461px;top:366px;width:3px;height:1px"></i>
<i class="n" style="left:484px;top:366px;width:3px;height:1px"></i>
<i class="n" style="left:507px;top:366px;width:3px;height:1px"></i>
<i class="n" style="left:444px;top:392px;width:3px;height:1px"></i>
<i class="n" style="left:467px;top:392px;width:3px;height:1px"></i>
<i class="n" style="left:489px;top:392px;width:3px;height:1px"></i>
<i class="n" style="left:509px;top:392px;width:3px;height:1px"></i>
<i class="n" style="left:427px;top:430px;width:3px;height:1px"></i>
<i class="n" style="left:432px;top:430px;width:4px;height:1px"></i>
<i class="n" style="left:450px;top:430px;width:3px;height:1px"></i>
<i class="n" style="left:455px;top:430px;width:4px;height:1px"></i>
<i class="n" style="left:472px;top:430px;width:4px;height:1px"></i>
<i class="n" style="left:478px;top:430px;width:3px;height:1px"></i>
<i class="n" style="left:495px;top:430px;width:3px;height:1px"></i>
<i class="n" style="left:501px;top:430px;width:3px;height:1px"></i>
<i class="n" style="left:514px;top:377px;width:1px;height:54px"></i>
<i class="n" style="left:529px;top:366px;width:3px;height:1px"></i>
<i class="n" style="left:552px;top:366px;width:3px;height:1px"></i>
<i class="n" style="left:535px;top:392px;width:3px;height:1px"></i>
<i class="n" style="left:518px;top:430px;width:3px;height:1px"></i>
<i class="n" style="left:523px;top:430px;width:4px;height:1px"></i>
<i class="n" style="left:541px;top:430px;width:3px;height:1px"></i>
<i class="n" style="left:546px;top:430px;width:4px;height:1px"></i>
<i class="n" style="left:575px;top:366px;width:3px;height:1px"></i>
<i class="n" style="left:598px;top:366px;width:3px;height:1px"></i>
<i class="n" style="left:620px;top:366px;width:3px;height:1px"></i>
<i class="n" style="left:643px;top:366px;width:3px;height:1px"></i>
<i class="n" style="left:580px;top:392px;width:3px;height:1px"></i>
<i class="n" style="left:604px;top:392px;width:3px;height:1px"></i>
<i class="n" style="left:626px;top:392px;width:3px;height:1px"></i>
<i class="n" style="left:646px;top:392px;width:3px;height:1px"></i>
<i class="n" style="left:564px;top:430px;width:3px;height:1px"></i>
<i class="n" style="left:568px;top:430px;width:4px;height:1px"></i>
<i class="n" style="left:586px;top:430px;width:3px;height:1px"></i>
<i class="n" style="left:592px;top:430px;width:4px;height:1px"></i>
<i class="n" style="left:608px;top:430px;width:4px;height:1px"></i>
<i class="n" style="left:614px;top:430px;width:3px;height:1px"></i>
<i class="n" style="left:632px;top:430px;width:3px;height:1px"></i>
<i class="n" style="left:638px;top:430px;width:3px;height:1px"></i>
<i class="n" style="left:650px;top:377px;width:1px;height:54px"></i>
<i class="n" style="left:666px;top:366px;width:3px;height:1px"></i>
<i class="n" style="left:689px;top:366px;width:3px;height:1px"></i>
<i class="n" style="left:711px;top:366px;width:3px;height:1px"></i>
<i class="n" style="left:734px;top:366px;width:3px;height:1px"></i>
<i class="n" style="left:672px;top:392px;width:3px;height:1px"></i>
<i class="n" style="left:694px;top:392px;width:3px;height:1px"></i>
<i class="n" style="left:716px;top:392px;width:3px;height:1px"></i>
<i class="n" style="left:736px;top:392px;width:3px;height:1px"></i>
<i class="n" style="left:654px;top:430px;width:3px;height:1px"></i>
<i class="n" style="left:660px;top:430px;width:4px;height:1px"></i>
<i class="n" style="left:678px;top:430px;width:3px;height:1px"></i>
<i class="n" style="left:682px;top:430px;width:4px;height:1px"></i>
<i class="n" style="left:700px;top:430px;width:4px;height:1px"></i>
<i class="n" style="left:706px;top:430px;width:3px;height:1px"></i>
<i class="n" style="left:722px;top:430px;width:3px;height:1px"></i>
<i class="n" style="left:728px;top:430px;width:3px;height:1px"></i>
<i class="n" style="left:757px;top:366px;width:3px;height:1px"></i>
<i class="n" style="left:780px;top:366px;width:3px;height:1px"></i>
<i class="n" style="left:802px;top:366px;width:3px;height:1px"></i>
<i class="n" style="left:825px;top:366px;width:3px;height:1px"></i>
<i class="n" style="left:762px;top:392px;width:3px;height:1px"></i>
<i class="n" style="left:786px;top:392px;width:3px;height:1px"></i>
<i class="n" style="left:808px;top:392px;width:3px;height:1px"></i>
<i class="n" style="left:828px;top:392px;width:3px;height:1px"></i>
<i class="n" style="left:746px;top:430px;width:3px;height:1px"></i>
<i class="n" style="left:750px;top:430px;width:4px;height:1px"></i>
<i class="n" style="left:768px;top:430px;width:3px;height:1px"></i>
<i class="n" style="left:774px;top:430px;width:4px;height:1px"></i>
<i class="n" style="left:790px;top:430px;width:4px;height:1px"></i>
<i class="n" style="left:796px;top:430px;width:3px;height:1px"></i>
<i class="n" style="left:814px;top:430px;width:3px;height:1px"></i>
<i class="n" style="left:820px;top:430px;width:3px;height:1px"></i>
<i class="n" style="left:835px;top:430px;width:2px;height:1px"></i>
<div class="clip cb" style="left:469px;top:435px;width:102px;height:105px;border-left:1px solid rgba(0,0,0,.55)"></div>
<i class="n" style="left:471px;top:536px;width:6px;height:1px"></i>
<i class="n" style="left:493px;top:536px;width:9px;height:1px"></i>
<i class="n" style="left:482px;top:499px;width:8px;height:1px"></i>
<i class="n" style="left:505px;top:499px;width:7px;height:1px"></i>
<i class="n" style="left:512px;top:492px;width:17px;height:1px"></i>
<i class="n" style="left:527px;top:481px;width:12px;height:1px"></i>
<i class="n" style="left:539px;top:473px;width:11px;height:1px"></i>
<i class="n" style="left:549px;top:466px;width:7px;height:1px"></i>
<i class="n" style="left:554px;top:455px;width:7px;height:1px"></i>
<i class="n" style="left:560px;top:448px;width:8px;height:1px"></i>
<div class="clip cr" style="left:151px;top:541px;width:227px;height:105px;border-left:1px solid rgba(0,0,0,.55)"><span class="ct" style="letter-spacing:-.4px;transform:rotate(.03deg) scaleX(.94)">08</span></div>
<i class="n" style="left:195px;top:590px;width:1px;height:54px"></i>
<i class="n" style="left:241px;top:590px;width:1px;height:54px"></i>
<i class="n" style="left:286px;top:590px;width:1px;height:54px"></i>
<i class="n" style="left:332px;top:590px;width:1px;height:54px"></i>
<i class="n" style="left:152px;top:644px;width:226px;height:1px"></i>
<div class="clip cb" style="left:378px;top:541px;width:182px;height:105px;border-left:1px solid rgba(0,0,0,.55)"></div>
<div class="clip cb" style="left:560px;top:541px;width:182px;height:105px;border-left:1px solid rgba(0,0,0,.55)"></div>
<i class="n" style="left:421px;top:606px;width:1px;height:38px"></i>
<i class="n" style="left:427px;top:626px;width:1px;height:18px"></i>
<i class="n" style="left:430px;top:589px;width:1px;height:55px"></i>
<i class="n" style="left:435px;top:623px;width:1px;height:21px"></i>
<i class="n" style="left:438px;top:620px;width:1px;height:24px"></i>
<i class="n" style="left:441px;top:572px;width:1px;height:72px"></i>
<i class="n" style="left:445px;top:566px;width:1px;height:78px"></i>
<i class="n" style="left:451px;top:609px;width:1px;height:35px"></i>
<i class="n" style="left:462px;top:600px;width:1px;height:44px"></i>
<i class="n" style="left:469px;top:637px;width:1px;height:7px"></i>
<i class="n" style="left:475px;top:589px;width:1px;height:55px"></i>
<i class="n" style="left:483px;top:631px;width:1px;height:13px"></i>
<i class="n" style="left:506px;top:580px;width:1px;height:64px"></i>
<i class="n" style="left:513px;top:614px;width:1px;height:30px"></i>
<i class="n" style="left:516px;top:611px;width:1px;height:33px"></i>
<i class="n" style="left:528px;top:574px;width:1px;height:70px"></i>
<i class="n" style="left:540px;top:600px;width:1px;height:44px"></i>
<i class="n" style="left:543px;top:594px;width:1px;height:50px"></i>
<i class="n" style="left:546px;top:569px;width:1px;height:75px"></i>
<i class="n" style="left:548px;top:618px;width:2px;height:26px"></i>
<i class="n" style="left:549px;top:579px;width:1px;height:65px"></i>
<i class="n" style="left:551px;top:625px;width:1px;height:19px"></i>
<i class="n" style="left:553px;top:555px;width:1px;height:89px"></i>
<i class="n" style="left:555px;top:555px;width:1px;height:89px"></i>
<i class="n" style="left:558px;top:555px;width:1px;height:89px"></i>
<i class="n" style="left:380px;top:643px;width:90px;height:1px"></i>
<i class="n" style="left:493px;top:643px;width:24px;height:1px"></i>
<i class="n" style="left:603px;top:606px;width:1px;height:38px"></i>
<i class="n" style="left:609px;top:626px;width:1px;height:18px"></i>
<i class="n" style="left:612px;top:589px;width:1px;height:55px"></i>
<i class="n" style="left:617px;top:623px;width:1px;height:21px"></i>
<i class="n" style="left:620px;top:620px;width:1px;height:24px"></i>
<i class="n" style="left:623px;top:572px;width:1px;height:72px"></i>
<i class="n" style="left:627px;top:566px;width:1px;height:78px"></i>
<i class="n" style="left:633px;top:609px;width:1px;height:35px"></i>
<i class="n" style="left:644px;top:600px;width:1px;height:44px"></i>
<i class="n" style="left:651px;top:637px;width:1px;height:7px"></i>
<i class="n" style="left:657px;top:589px;width:1px;height:55px"></i>
<i class="n" style="left:665px;top:631px;width:1px;height:13px"></i>
<i class="n" style="left:688px;top:580px;width:1px;height:64px"></i>
<i class="n" style="left:695px;top:614px;width:1px;height:30px"></i>
<i class="n" style="left:698px;top:611px;width:1px;height:33px"></i>
<i class="n" style="left:710px;top:574px;width:1px;height:70px"></i>
<i class="n" style="left:722px;top:600px;width:1px;height:44px"></i>
<i class="n" style="left:725px;top:594px;width:1px;height:50px"></i>
<i class="n" style="left:728px;top:569px;width:1px;height:75px"></i>
<i class="n" style="left:730px;top:618px;width:2px;height:26px"></i>
<i class="n" style="left:731px;top:579px;width:1px;height:65px"></i>
<i class="n" style="left:733px;top:625px;width:1px;height:19px"></i>
<i class="n" style="left:735px;top:555px;width:1px;height:89px"></i>
<i class="n" style="left:737px;top:555px;width:1px;height:89px"></i>
<i class="n" style="left:740px;top:555px;width:1px;height:89px"></i>
<i class="n" style="left:562px;top:643px;width:90px;height:1px"></i>
<i class="n" style="left:675px;top:643px;width:24px;height:1px"></i>
<i class="n" style="left:730px;top:618px;width:1px;height:26px"></i>
<i class="n" style="left:731px;top:618px;width:1px;height:26px"></i>
<i class="n" style="left:732px;top:625px;width:1px;height:19px"></i>
<i class="n" style="left:733px;top:626px;width:1px;height:18px"></i>
<i class="n" style="left:734px;top:627px;width:1px;height:17px"></i>
<div class="clip co" style="left:60px;top:648px;width:68px;height:105px;border-left:1px solid rgba(0,0,0,.55)"><span class="ct" style="letter-spacing:-.4px;transform:rotate(.03deg) scaleX(.94)">07</span></div>
<i class="n" style="left:90px;top:661px;width:1px;height:1px"></i>
<i class="n" style="left:104px;top:661px;width:1px;height:1px"></i>
<i class="n" style="left:68px;top:734px;width:3px;height:1px"></i>
<i class="n" style="left:74px;top:734px;width:3px;height:1px"></i>
<i class="n" style="left:80px;top:734px;width:2px;height:1px"></i>
<i class="n" style="left:96px;top:734px;width:3px;height:1px"></i>
<i class="n" style="left:100px;top:734px;width:2px;height:1px"></i>
<i class="n" style="left:110px;top:734px;width:2px;height:1px"></i>
<i class="n" style="left:86px;top:742px;width:2px;height:1px"></i>
<i class="n" style="left:64px;top:749px;width:2px;height:1px"></i>
<i class="n" style="left:115px;top:749px;width:2px;height:1px"></i>
<div class="clip cm" style="left:128px;top:648px;width:23px;height:105px;border-left:1px solid rgba(0,0,0,.55)"><span class="ct" style="letter-spacing:-.4px;transform:rotate(.03deg) scaleX(.94)">02</span></div>
<div class="clip co" style="left:151px;top:648px;width:45px;height:105px;border-left:1px solid rgba(0,0,0,.55)"><span class="ct" style="letter-spacing:-.4px;transform:rotate(.03deg) scaleX(.94)">07</span></div>
<i class="n" style="left:182px;top:661px;width:1px;height:1px"></i>
<i class="n" style="left:195px;top:661px;width:1px;height:1px"></i>
<i class="n" style="left:160px;top:734px;width:3px;height:1px"></i>
<i class="n" style="left:165px;top:734px;width:3px;height:1px"></i>
<i class="n" style="left:171px;top:734px;width:2px;height:1px"></i>
<i class="n" style="left:186px;top:734px;width:3px;height:1px"></i>
<i class="n" style="left:191px;top:734px;width:2px;height:1px"></i>
<i class="n" style="left:176px;top:742px;width:2px;height:1px"></i>
<i class="n" style="left:155px;top:749px;width:2px;height:1px"></i>
<div class="clip ci" style="left:196px;top:648px;width:23px;height:105px;border-left:1px solid rgba(0,0,0,.55)"><span class="ct" style="letter-spacing:-.4px;transform:rotate(.03deg) scaleX(.94)">03</span></div>
<i class="n" style="left:201px;top:683px;width:1px;height:1px"></i>
<i class="n" style="left:213px;top:697px;width:1px;height:1px"></i>
<i class="n" style="left:206px;top:749px;width:2px;height:1px"></i>
<i class="n" style="left:218px;top:749px;width:1px;height:1px"></i>
<div class="clip ctl" style="left:219px;top:648px;width:23px;height:105px;border-left:1px solid rgba(0,0,0,.55)"><span class="ct" style="letter-spacing:-.4px;transform:rotate(.03deg) scaleX(.94)">04</span></div>
<i class="n" style="left:226px;top:661px;width:2px;height:1px"></i>
<i class="n" style="left:237px;top:715px;width:1px;height:1px"></i>
<i class="n" style="left:232px;top:742px;width:1px;height:1px"></i>
<i class="n" style="left:240px;top:742px;width:1px;height:1px"></i>
<div class="clip co" style="left:242px;top:648px;width:68px;height:105px;border-left:1px solid rgba(0,0,0,.55)"><span class="ct" style="letter-spacing:-.4px;transform:rotate(.03deg) scaleX(.94)">07</span></div>
<i class="n" style="left:272px;top:661px;width:1px;height:1px"></i>
<i class="n" style="left:286px;top:661px;width:1px;height:1px"></i>
<i class="n" style="left:250px;top:734px;width:3px;height:1px"></i>
<i class="n" style="left:256px;top:734px;width:3px;height:1px"></i>
<i class="n" style="left:262px;top:734px;width:2px;height:1px"></i>
<i class="n" style="left:278px;top:734px;width:3px;height:1px"></i>
<i class="n" style="left:282px;top:734px;width:2px;height:1px"></i>
<i class="n" style="left:292px;top:734px;width:2px;height:1px"></i>
<i class="n" style="left:268px;top:742px;width:2px;height:1px"></i>
<i class="n" style="left:246px;top:749px;width:2px;height:1px"></i>
<i class="n" style="left:297px;top:749px;width:2px;height:1px"></i>
<i class="n" style="left:302px;top:749px;width:2px;height:1px"></i>
<i class="n" style="left:308px;top:749px;width:2px;height:1px"></i>
<div class="clip ctl" style="left:310px;top:648px;width:23px;height:105px;border-left:1px solid rgba(0,0,0,.55)"><span class="ct" style="letter-spacing:-.4px;transform:rotate(.03deg) scaleX(.94)">04</span></div>
<i class="n" style="left:317px;top:661px;width:2px;height:1px"></i>
<i class="n" style="left:328px;top:715px;width:1px;height:1px"></i>
<i class="n" style="left:323px;top:742px;width:1px;height:1px"></i>
<i class="n" style="left:331px;top:742px;width:1px;height:1px"></i>
<div class="clip co" style="left:333px;top:648px;width:45px;height:105px;border-left:1px solid rgba(0,0,0,.55)"><span class="ct" style="letter-spacing:-.4px;transform:rotate(.03deg) scaleX(.94)">07</span></div>
<i class="n" style="left:364px;top:661px;width:1px;height:1px"></i>
<i class="n" style="left:377px;top:661px;width:1px;height:1px"></i>
<i class="n" style="left:342px;top:734px;width:3px;height:1px"></i>
<i class="n" style="left:347px;top:734px;width:3px;height:1px"></i>
<i class="n" style="left:353px;top:734px;width:2px;height:1px"></i>
<i class="n" style="left:368px;top:734px;width:3px;height:1px"></i>
<i class="n" style="left:373px;top:734px;width:2px;height:1px"></i>
<i class="n" style="left:358px;top:742px;width:2px;height:1px"></i>
<i class="n" style="left:337px;top:749px;width:2px;height:1px"></i>
<div class="clip ci" style="left:378px;top:648px;width:23px;height:105px;border-left:1px solid rgba(0,0,0,.55)"><span class="ct" style="letter-spacing:-.4px;transform:rotate(.03deg) scaleX(.94)">03</span></div>
<i class="n" style="left:383px;top:683px;width:1px;height:1px"></i>
<i class="n" style="left:395px;top:697px;width:1px;height:1px"></i>
<i class="n" style="left:388px;top:749px;width:2px;height:1px"></i>
<i class="n" style="left:400px;top:749px;width:1px;height:1px"></i>
<div class="clip ctl" style="left:401px;top:648px;width:23px;height:105px;border-left:1px solid rgba(0,0,0,.55)"><span class="ct" style="letter-spacing:-.4px;transform:rotate(.03deg) scaleX(.94)">04</span></div>
<i class="n" style="left:408px;top:661px;width:2px;height:1px"></i>
<i class="n" style="left:419px;top:715px;width:1px;height:1px"></i>
<i class="n" style="left:414px;top:742px;width:1px;height:1px"></i>
<i class="n" style="left:422px;top:742px;width:1px;height:1px"></i>
<div class="clip cb" style="left:424px;top:648px;width:136px;height:105px;border-left:1px solid rgba(0,0,0,.55)"></div>
<div class="clip co" style="left:560px;top:648px;width:46px;height:105px;border-left:1px solid rgba(0,0,0,.55)"><span class="ct" style="letter-spacing:-.4px;transform:rotate(.03deg) scaleX(.94)">07</span></div>
<i class="n" style="left:591px;top:661px;width:1px;height:1px"></i>
<i class="n" style="left:605px;top:661px;width:1px;height:1px"></i>
<i class="n" style="left:569px;top:734px;width:3px;height:1px"></i>
<i class="n" style="left:574px;top:734px;width:3px;height:1px"></i>
<i class="n" style="left:580px;top:734px;width:2px;height:1px"></i>
<i class="n" style="left:596px;top:734px;width:3px;height:1px"></i>
<i class="n" style="left:600px;top:734px;width:2px;height:1px"></i>
<i class="n" style="left:586px;top:742px;width:2px;height:1px"></i>
<i class="n" style="left:564px;top:749px;width:2px;height:1px"></i>
<div class="clip ci" style="left:606px;top:648px;width:22px;height:105px;border-left:1px solid rgba(0,0,0,.55)"><span class="ct" style="letter-spacing:-.4px;transform:rotate(.03deg) scaleX(.94)">03</span></div>
<i class="n" style="left:611px;top:683px;width:1px;height:1px"></i>
<i class="n" style="left:623px;top:697px;width:1px;height:1px"></i>
<i class="n" style="left:616px;top:749px;width:2px;height:1px"></i>
<div class="clip ctl" style="left:628px;top:648px;width:23px;height:105px;border-left:1px solid rgba(0,0,0,.55)"><span class="ct" style="letter-spacing:-.4px;transform:rotate(.03deg) scaleX(.94)">04</span></div>
<i class="n" style="left:636px;top:661px;width:2px;height:1px"></i>
<i class="n" style="left:647px;top:715px;width:1px;height:1px"></i>
<i class="n" style="left:642px;top:742px;width:1px;height:1px"></i>
<i class="n" style="left:650px;top:742px;width:1px;height:1px"></i>
<div class="clip co" style="left:651px;top:648px;width:46px;height:105px;border-left:1px solid rgba(0,0,0,.55)"><span class="ct" style="letter-spacing:-.4px;transform:rotate(.03deg) scaleX(.94)">07</span></div>
<i class="n" style="left:682px;top:661px;width:1px;height:1px"></i>
<i class="n" style="left:696px;top:661px;width:1px;height:1px"></i>
<i class="n" style="left:660px;top:734px;width:3px;height:1px"></i>
<i class="n" style="left:666px;top:734px;width:3px;height:1px"></i>
<i class="n" style="left:672px;top:734px;width:2px;height:1px"></i>
<i class="n" style="left:687px;top:734px;width:3px;height:1px"></i>
<i class="n" style="left:692px;top:734px;width:2px;height:1px"></i>
<i class="n" style="left:677px;top:742px;width:2px;height:1px"></i>
<i class="n" style="left:656px;top:749px;width:2px;height:1px"></i>
<div class="clip ci" style="left:697px;top:648px;width:22px;height:105px;border-left:1px solid rgba(0,0,0,.55)"><span class="ct" style="letter-spacing:-.4px;transform:rotate(.03deg) scaleX(.94)">03</span></div>
<i class="n" style="left:702px;top:683px;width:1px;height:1px"></i>
<i class="n" style="left:714px;top:697px;width:1px;height:1px"></i>
<i class="n" style="left:706px;top:749px;width:2px;height:1px"></i>
<div class="clip ctl" style="left:719px;top:648px;width:23px;height:105px;border-left:1px solid rgba(0,0,0,.55)"><span class="ct" style="letter-spacing:-.4px;transform:rotate(.03deg) scaleX(.94)">04</span></div>
<i class="n" style="left:727px;top:661px;width:2px;height:1px"></i>
<i class="n" style="left:738px;top:715px;width:1px;height:1px"></i>
<i class="n" style="left:733px;top:742px;width:1px;height:1px"></i>
<i class="n" style="left:741px;top:742px;width:1px;height:1px"></i>
<div class="clip co" style="left:742px;top:648px;width:68px;height:105px;border-left:1px solid rgba(0,0,0,.55)"><span class="ct" style="letter-spacing:-.4px;transform:rotate(.03deg) scaleX(.94)">07</span></div>
<i class="n" style="left:773px;top:661px;width:1px;height:1px"></i>
<i class="n" style="left:787px;top:661px;width:1px;height:1px"></i>
<i class="n" style="left:751px;top:734px;width:3px;height:1px"></i>
<i class="n" style="left:756px;top:734px;width:3px;height:1px"></i>
<i class="n" style="left:762px;top:734px;width:2px;height:1px"></i>
<i class="n" style="left:778px;top:734px;width:3px;height:1px"></i>
<i class="n" style="left:782px;top:734px;width:2px;height:1px"></i>
<i class="n" style="left:792px;top:734px;width:2px;height:1px"></i>
<i class="n" style="left:768px;top:742px;width:2px;height:1px"></i>
<i class="n" style="left:746px;top:749px;width:2px;height:1px"></i>
<i class="n" style="left:798px;top:749px;width:2px;height:1px"></i>
<i class="n" style="left:802px;top:749px;width:2px;height:1px"></i>
<i class="n" style="left:808px;top:749px;width:2px;height:1px"></i>
<div class="clip ctl" style="left:810px;top:648px;width:23px;height:105px;border-left:1px solid rgba(0,0,0,.55)"><span class="ct" style="letter-spacing:-.4px;transform:rotate(.03deg) scaleX(.94)">04</span></div>
<i class="n" style="left:818px;top:661px;width:2px;height:1px"></i>
<i class="n" style="left:829px;top:715px;width:1px;height:1px"></i>
<i class="n" style="left:824px;top:742px;width:1px;height:1px"></i>
<i class="n" style="left:832px;top:742px;width:1px;height:1px"></i>
<i class="n" style="left:454px;top:661px;width:1px;height:1px"></i>
<i class="n" style="left:490px;top:661px;width:2px;height:1px"></i>
<i class="n" style="left:499px;top:661px;width:1px;height:1px"></i>
<i class="n" style="left:513px;top:661px;width:2px;height:1px"></i>
<i class="n" style="left:536px;top:661px;width:1px;height:1px"></i>
<i class="n" style="left:544px;top:661px;width:2px;height:1px"></i>
<i class="n" style="left:559px;top:661px;width:1px;height:1px"></i>
<i class="n" style="left:509px;top:668px;width:1px;height:1px"></i>
<i class="n" style="left:554px;top:668px;width:2px;height:1px"></i>
<i class="n" style="left:469px;top:675px;width:2px;height:1px"></i>
<i class="n" style="left:509px;top:675px;width:1px;height:1px"></i>
<i class="n" style="left:515px;top:675px;width:1px;height:1px"></i>
<i class="n" style="left:554px;top:675px;width:2px;height:1px"></i>
<i class="n" style="left:425px;top:675px;width:1px;height:1px"></i>
<i class="n" style="left:554px;top:697px;width:2px;height:1px"></i>
<i class="n" style="left:557px;top:697px;width:1px;height:1px"></i>
<i class="n" style="left:455px;top:742px;width:2px;height:1px"></i>
<i class="n" style="left:490px;top:742px;width:3px;height:1px"></i>
<i class="n" style="left:500px;top:742px;width:2px;height:1px"></i>
<i class="n" style="left:512px;top:742px;width:1px;height:1px"></i>
<i class="n" style="left:536px;top:742px;width:2px;height:1px"></i>
<i class="n" style="left:546px;top:742px;width:1px;height:1px"></i>
<i class="n" style="left:557px;top:742px;width:2px;height:1px"></i>
<i class="n" style="left:469px;top:749px;width:2px;height:1px"></i>
<i class="n" style="left:492px;top:749px;width:2px;height:1px"></i>
<i class="n" style="left:515px;top:749px;width:2px;height:1px"></i>
<i class="n" style="left:537px;top:749px;width:2px;height:1px"></i>
<i class="n" style="left:554px;top:749px;width:2px;height:1px"></i>
<i class="n" style="left:425px;top:749px;width:1px;height:1px"></i>
<div class="a" style="left:8px;top:114px;width:994px;height:1px;background:#000"></div>
<div class="a" style="left:8px;top:220px;width:994px;height:1px;background:#000"></div>
<div class="a" style="left:8px;top:327px;width:994px;height:1px;background:#000"></div>
<div class="a" style="left:8px;top:433px;width:994px;height:1px;background:#000"></div>
<div class="a" style="left:8px;top:540px;width:994px;height:1px;background:#000"></div>
<div class="a" style="left:8px;top:646px;width:994px;height:1px;background:#000"></div>
<div class="a" style="left:60px;top:753px;width:942px;height:1px;background:#000"></div>
<div class="a" style="left:1001px;top:115px;width:1px;height:639px;background:#000"></div>
<div class="a" style="left:60px;top:115px;width:1px;height:639px;background:#000"></div>
<div class="a" style="left:61px;top:110px;width:1px;height:644px;background:#f2f2f2"></div>
<div class="a" style="left:1002px;top:115px;width:30px;height:639px;background:#000"></div>
<div class="a" style="left:1002px;top:115px;width:30px;height:52px;background:linear-gradient(90deg,#4c4a4a 0,#2c2828 45%,#262222 100%);border-bottom:1px solid #3a3838"></div>
<div class="a" style="left:1002px;top:168px;width:30px;height:52px;background:linear-gradient(90deg,#4c4a4a 0,#2c2828 45%,#262222 100%);border-bottom:1px solid #3a3838"></div>
<div class="a" style="left:1002px;top:134px;width:30px;text-align:center;color:#f2f2f2;font-size:14.5px;line-height:16px">+</div>
<div class="a" style="left:1002px;top:186px;width:30px;text-align:center;color:#f2f2f2;font-size:15px;line-height:16px;font-weight:bold">-</div>
<div class="a" style="left:1002px;top:222px;width:30px;height:532px;background:linear-gradient(90deg,#2d2928 0,#3d3937 8%,#2d2928 17%,#2d2928 80%,#3d3937 88%,#2d2928 100%);border-top:1px solid #3c3838"></div>
<div class="a" style="left:1007px;top:226px;width:19px;height:524px;background:#a7a3a3;border:1px solid #000"></div>
<div class="a" style="left:1007px;top:226px;width:19px;height:393px;border:1px solid #000;background:linear-gradient(90deg,#666 0,#4a4a4a 6%,#2a2727 42%,#232020 100%)"></div>
<div class="a" style="left:1012px;top:419px;width:11px;height:1px;background:#0c0c0c;box-shadow:0 1px 0 #4c4c4c"></div>
<div class="a" style="left:1012px;top:422px;width:11px;height:1px;background:#0c0c0c;box-shadow:0 1px 0 #4c4c4c"></div>
<div class="a" style="left:1012px;top:425px;width:11px;height:1px;background:#0c0c0c;box-shadow:0 1px 0 #4c4c4c"></div>
<div class="a" style="left:8px;top:754px;width:1024px;height:44px;background:#000"></div>
<div class="a" style="left:9px;top:755px;width:112px;height:42px;background:linear-gradient(#525050 0,#343131 40%,#242020 70%,#221e1e 100%);"></div>
<div class="a" style="left:122px;top:755px;width:113px;height:42px;background:linear-gradient(#4daad4 0,#2e98cb 48%,#0985c0 52%,#0582bd 100%);border:1px solid #4cc0f0;"></div>
<div class="a" style="left:236px;top:755px;width:112px;height:42px;background:linear-gradient(#525050 0,#343131 40%,#242020 70%,#221e1e 100%);"></div>
<div class="a" style="left:349px;top:755px;width:113px;height:42px;background:linear-gradient(#525050 0,#343131 40%,#242020 70%,#221e1e 100%);"></div>
<div class="a" style="left:463px;top:755px;width:113px;height:42px;background:linear-gradient(#525050 0,#343131 40%,#242020 70%,#221e1e 100%);"></div>
<div class="a" style="left:577px;top:755px;width:340px;height:42px;background:linear-gradient(#525050 0,#343131 40%,#242020 70%,#221e1e 100%);"></div>
<div class="a" style="left:918px;top:755px;width:114px;height:42px;background:linear-gradient(#2b2b2b 0,#1c1c1c 50%,#121111 100%);"></div>
<div class="a btxt" style="left:15px;top:781px;width:100px;letter-spacing:-0.31px">Tools</div>
<div class="a btxt" style="left:129px;top:781px;width:100px;letter-spacing:0.39px">History</div>
<div class="a btxt" style="left:242.3px;top:781px;width:100px;letter-spacing:0.65px">Zoom</div>
<div class="a btxt" style="left:355.8px;top:781px;width:100px;letter-spacing:0.8px">Select</div>
<div class="a btxt" style="left:469.70000000000005px;top:781px;width:100px;letter-spacing:0px">Draw</div>
<div class="a btxt" style="left:645px;top:770px;width:200px;font-size:11.2px;letter-spacing:-.1px;margin-top:0">34/1000 parts used</div>
<div class="a btxt" style="left:924.5px;top:781px;width:100px;color:#6e6e6e;letter-spacing:-.05px">Edit</div>
<svg class="a" style="left:56px;top:759px" width="20" height="19" viewBox="0 0 20 19"><defs><mask id="wm"><rect width="20" height="19" fill="#fff"/><path d="M4.3 -1L4.5 5.4C4.5 7.2 7.5 7.2 7.5 5.4L7.9 -1Z" fill="#000" transform="rotate(-8 6.2 6.2)"/></mask></defs><g mask="url(#wm)"><circle cx="6.2" cy="6.3" r="4.7" fill="url(#og2)"/></g><defs><linearGradient id="og2" x1="0" y1="0" x2="1" y2="1"><stop offset="0" stop-color="#f9aa62"/><stop offset="1" stop-color="#ea7a1c"/></linearGradient></defs><path d="M8.6 8.7L15.4 14.9" stroke="#ee8122" stroke-width="3.7" stroke-linecap="round" fill="none"/></svg>
<svg class="a" style="left:168px;top:759px" width="22" height="19" viewBox="0 0 22 19"><defs><linearGradient id="og" x1="0" y1="0" x2="0" y2="1"><stop offset="0" stop-color="#f7a45a"/><stop offset="1" stop-color="#e9781c"/></linearGradient></defs><path d="M2 9.3L8.6 2L8.7 4.3C13 2.6 18.4 4.4 18.5 8.6C18.6 12.4 15 15.6 11 16.8C13.4 14.2 14.8 12 14 10.2C13.3 8.7 11 8.8 8.9 9.8L9 12.6Z" fill="url(#og)"/></svg>
<svg class="a" style="left:283px;top:759px" width="20" height="19" viewBox="0 0 20 19" fill="none" stroke="#f08a2e"><circle cx="7.2" cy="7" r="4.4" stroke-width="1.5"/><path d="M10.6 10.6L16 16.2" stroke-width="2.8" stroke-linecap="round"/><path d="M5 5.6C5.6 4.6 6.6 4.2 7.6 4.4" stroke-width="1"/></svg>
<svg class="a" style="left:393px;top:759px" width="26" height="19" viewBox="0 0 26 19" fill="none" stroke="#f08a2e"><rect x="1.6" y="2.6" width="17" height="10.4" stroke-width="1.2" stroke-dasharray="2 1.4"/><path d="M18.6 8.4V17.6M14 13H23.2" stroke-width="1.2"/></svg>
<svg class="a" style="left:510px;top:759px" width="20" height="19" viewBox="0 0 20 19"><path d="M5 4.4L8.4 1.8L17 12.8L13.4 15.6Z" fill="url(#og2)"/><path d="M5 4.4L8.4 1.8L4.2 0.8Z" fill="#a85a18"/></svg>
<svg class="a" style="left:964px;top:760px" width="22" height="15" viewBox="0 0 22 15"><rect x="2.1" y="2" width="17.6" height="11.6" fill="#202224" stroke="#1a6c98" stroke-width="1.1"/><rect x="3.8" y="3.8" width="6" height="1.6" fill="#1a6c98"/><rect x="6.6" y="6.6" width="7" height="1.6" fill="#1a6c98"/><rect x="10" y="9.4" width="7.4" height="1.6" fill="#1a6c98"/></svg>
<div class="a" style="left:121px;top:714px;width:115px;height:40px;background:#000"></div>
<div class="a" style="left:122px;top:715px;width:113px;height:38px;border:1px solid #4cc0f0;background:linear-gradient(#4daad4 0,#2e98cb 48%,#0985c0 52%,#0582bd 100%)"></div>
<div class="a" style="left:160px;top:728.6px;width:40px;text-align:center;color:#c4e6f6;font-size:11px;line-height:12px;letter-spacing:1.5px">...</div>
<svg class="a" style="left:200px;top:500px" width="240" height="240" viewBox="200 500 240 240"><path d="M425.9 509.4L237.1 704.5L233.6 697.1L225.2 726.8L254.5 715.4L246 713.2L426.6 510Z" fill="#e8412a"/></svg>
</body></html>
